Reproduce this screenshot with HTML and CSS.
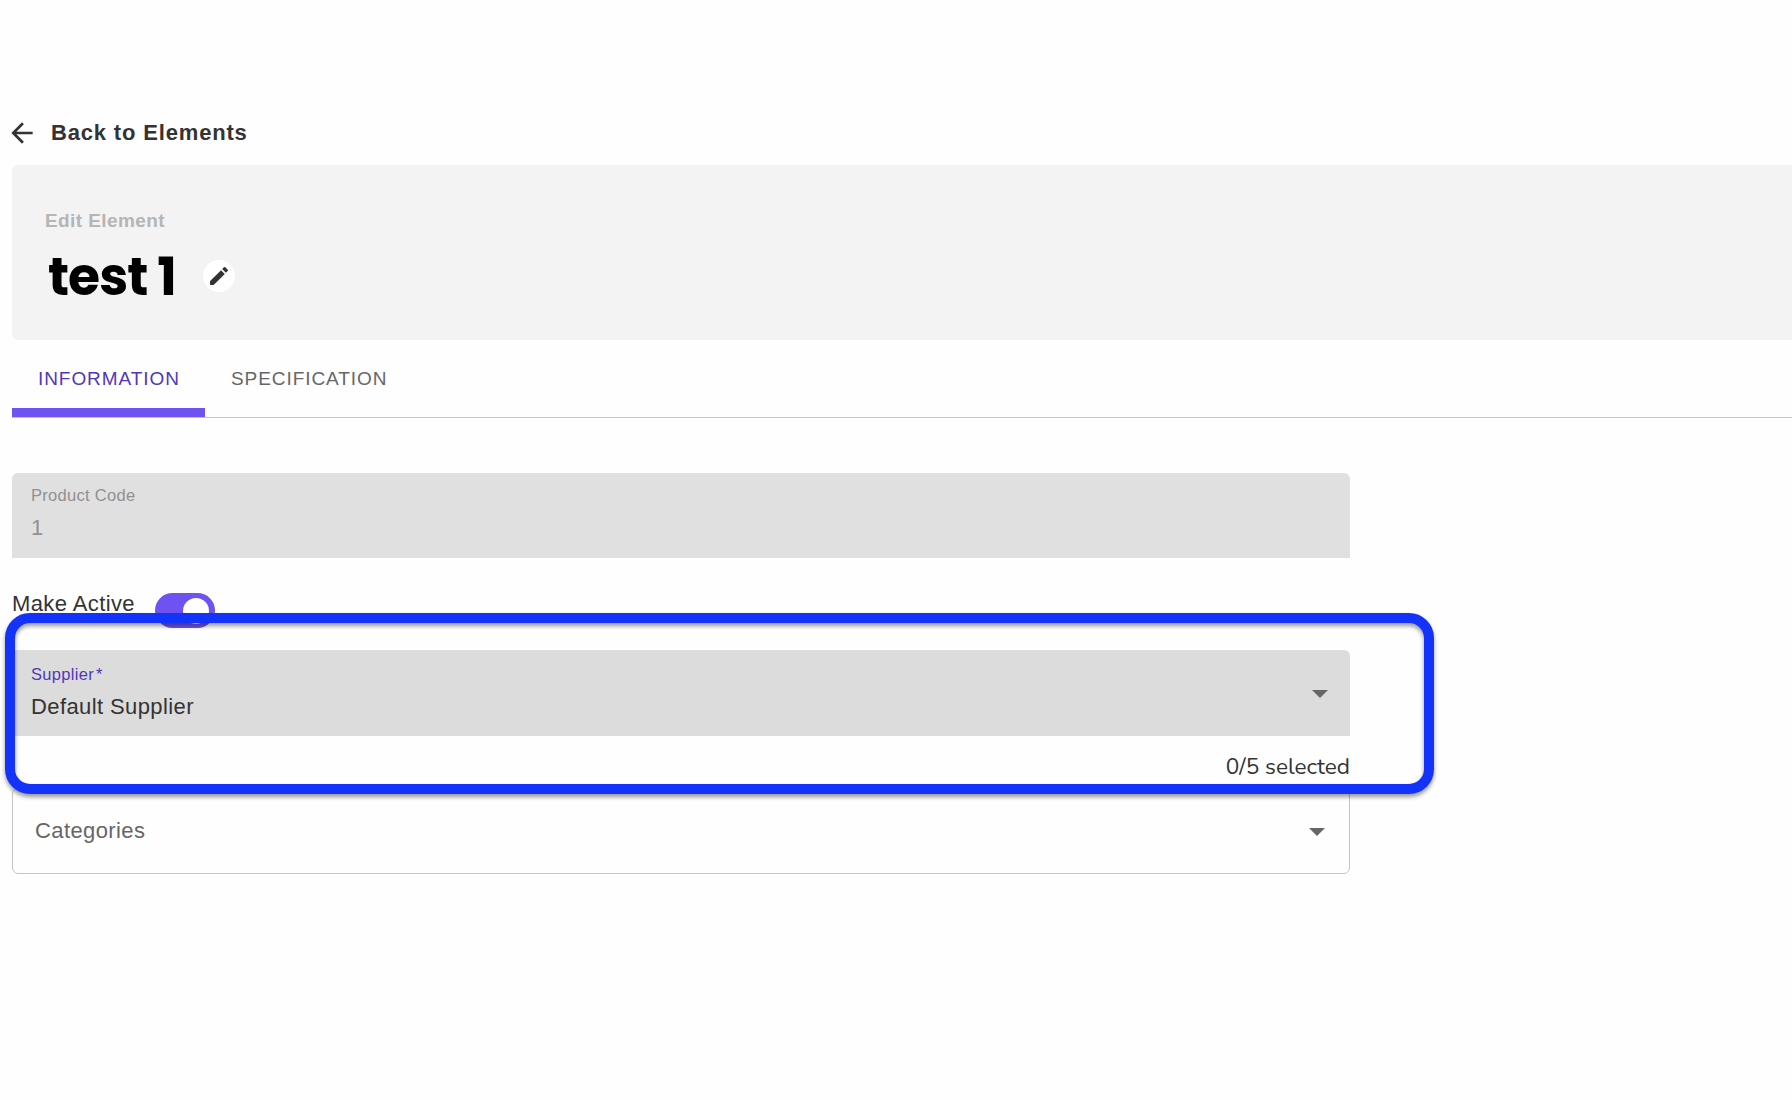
FILE: index.html
```html
<!DOCTYPE html>
<html lang="en">
<head>
  <meta charset="UTF-8">
  <meta name="viewport" content="width=device-width, initial-scale=1.0">
  <title>Edit Element</title>
  <link rel="stylesheet" href="styles.css">
</head>
<body>
  <a class="back" href="#">
    <svg class="back-icon" viewBox="0 0 24 24"><path d="M20 11H7.83l5.59-5.59L12 4l-8 8 8 8 1.41-1.41L7.83 13H20v-2z"/></svg>
    <span>Back to Elements</span>
  </a>

  <header class="header">
    <div class="header-label">Edit Element</div>
    <div class="header-title">
      <h1>test 1</h1>
      <button class="edit-button" aria-label="Edit name">
        <svg viewBox="0 0 24 24"><path d="M3 17.46v3.04c0 .28.22.5.5.5h3.04c.13 0 .26-.05.35-.15L17.81 9.94l-3.75-3.75L3.15 17.1c-.1.1-.15.22-.15.36zM20.71 7.04a1 1 0 0 0 0-1.41l-2.34-2.34a1 1 0 0 0-1.41 0l-1.83 1.83 3.75 3.75 1.83-1.83z"/></svg>
      </button>
    </div>
  </header>

  <nav class="tabs">
    <a class="tab active" href="#">INFORMATION</a>
    <a class="tab" href="#">SPECIFICATION</a>
  </nav>

  <main class="form">
    <div class="field disabled">
      <label>Product Code</label>
      <div class="value">1</div>
    </div>

    <div class="toggle-row">
      <span>Make Active</span>
      <span class="toggle"><span class="knob"></span></span>
    </div>

    <div class="field supplier">
      <div>
        <label>Supplier<span class="required">*</span></label>
        <div class="value">Default Supplier</div>
      </div>
      <span class="arrow"></span>
    </div>

    <div class="count">0/5 selected</div>

    <div class="select">
      <span>Categories</span>
      <span class="arrow"></span>
    </div>

    <div class="highlight"></div>
  </main>
</body>
</html>
```
FILE: styles.css
```css
* {
  box-sizing: border-box;
}
body {
  margin: 0;
  padding: 117px 0 0 12px;
  font-family: "Liberation Sans", Arial, sans-serif;
  font-size: 22px;
  line-height: 30px;
  color: #333;
  background-color: #fefefe;
  overflow: hidden;
}
a {
  text-decoration: none;
  color: inherit;
}
.back {
  display: flex;
  gap: 13px;
  height: 48px;
  margin-left: -6px;
  font-weight: bold;
  line-height: 32px;
  letter-spacing: 0.83px;
}
.back-icon {
  width: 32px;
  height: 32px;
  fill: #333;
}
.header {
  height: 175px;
  padding: 44px 33px 0;
  background-color: #f3f3f3;
  border-radius: 6px 0 0 6px;
}
.header-label {
  font-size: 19px;
  font-weight: bold;
  line-height: 24px;
  letter-spacing: 0.4px;
  color: #b5b5b5;
}
.header-title {
  display: flex;
  align-items: flex-start;
  margin-top: 13px;
  padding-left: 3px;
}
.header-title h1 {
  width: 155px;
  margin: 1px 0 0;
  font-family: Poppins, Inter, sans-serif;
  font-size: 52px;
  font-weight: 700;
  line-height: 60px;
  letter-spacing: -1px;
  color: #000;
}
.edit-button {
  display: flex;
  align-items: center;
  justify-content: center;
  width: 32px;
  height: 32px;
  margin-top: 14px;
  padding: 0;
  border: none;
  border-radius: 50%;
  background-color: #fff;
}
.edit-button svg {
  width: 24px;
  height: 24px;
  fill: #333;
}
.tabs {
  display: flex;
  height: 78px;
  border-bottom: 1px solid #c4c4c4;
}
.tab {
  padding: 26px 26px 0;
  font-size: 19px;
  line-height: 26px;
  letter-spacing: 0.93px;
  color: #666;
}
.tab.active {
  width: 193px;
  color: #5237b8;
  border-bottom: 9px solid #6f52f2;
}
.form {
  position: relative;
  width: 1338px;
  padding-top: 55px;
}
.field {
  height: 85px;
  padding: 12px 19px;
  border-radius: 6px 6px 0 0;
}
.field label {
  display: block;
  font-size: 16.5px;
  line-height: 20px;
  letter-spacing: 0.3px;
}
.field .value {
  margin-top: 8px;
  letter-spacing: 0.4px;
}
.disabled {
  background-color: #e0e0e0;
  color: #909090;
}
.toggle-row {
  display: flex;
  gap: 20px;
  height: 92px;
  padding-top: 30px;
  line-height: 32px;
  letter-spacing: 0.4px;
}
.toggle {
  display: flex;
  justify-content: flex-end;
  width: 60px;
  height: 35px;
  margin-top: 5px;
  padding: 5px 6px;
  border-radius: 18px;
  background-color: #6f52f2;
}
.knob {
  width: 26px;
  height: 26px;
  border-radius: 50%;
  background-color: #fff;
}
.supplier {
  display: flex;
  justify-content: space-between;
  align-items: center;
  height: 86px;
  padding: 0 22px 0 19px;
  background-color: #dcdcdc;
}
.supplier label {
  color: #5237b8;
}
.required {
  margin-left: 2px;
}
.arrow {
  width: 0;
  height: 0;
  margin-top: 2px;
  border-left: 8px solid transparent;
  border-right: 8px solid transparent;
  border-top: 8px solid #666;
}
.count {
  height: 52px;
  padding-top: 16px;
  font-family: Nunito, Lato, sans-serif;
  font-size: 22.6px;
  text-align: right;
}
.select {
  display: flex;
  justify-content: space-between;
  align-items: center;
  height: 86px;
  padding: 0 24px 0 22px;
  border: 1px solid #c4c4c4;
  border-radius: 6px;
  letter-spacing: 0.4px;
  color: #666;
}
.highlight {
  position: absolute;
  top: 195px;
  left: -7px;
  width: 1429px;
  height: 181px;
  border: 10px solid #1433fa;
  border-radius: 25px;
  filter: drop-shadow(0 3px 2px rgba(0, 0, 0, 0.4));
}
```
